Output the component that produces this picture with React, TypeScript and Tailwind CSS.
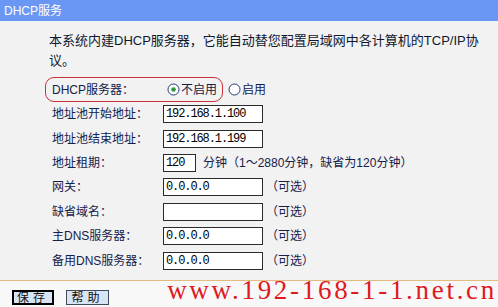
const cjk = "font-['Liberation_Sans','Noto_Sans_CJK_SC',sans-serif]"

function Radio({ checked }: { checked?: boolean }) {
  return (
    <svg width="13" height="13" viewBox="0 0 13 13" className="shrink-0">
      <circle cx="6.5" cy="6.5" r="5.5" fill="#fff" stroke="#1f3a70" strokeWidth="1" />
      {checked && <circle cx="6.5" cy="6.5" r="2.3" fill="#2f9a3a" />}
    </svg>
  )
}

function Box({ value, w = 'w-[100px]' }: { value?: string; w?: string }) {
  return (
    <div
      className={`${w} h-[18px] shrink-0 border border-[#2a2a2a] bg-white pl-[2px] font-['Liberation_Mono',monospace] text-[12px] leading-[16px] tracking-[-1.1px] text-black`}
    >
      {value}
    </div>
  )
}

function Row({ label, children }: { label: string; children: React.ReactNode }) {
  return (
    <div className="flex h-[24.4px] items-center pl-[52px]">
      <div className="w-[111px] shrink-0 text-[12px] text-[#15204a]">{label}</div>
      {children}
    </div>
  )
}

export default function App() {
  return (
    <div className={`relative h-[307px] w-[498px] overflow-hidden bg-[#f2f2f2] ${cjk}`}>
      {/* header */}
      <div className="flex h-[21px] items-center bg-[#6b97f4] pl-[4px] text-[12px] text-white">
        DHCP服务
      </div>

      {/* body */}
      <div className="h-[259px] pt-[10px]">
        <p className="pl-[49px] text-[13px] leading-[20px] text-[#101830]">
          <span className="whitespace-nowrap">本系统内建DHCP服务器，它能自动替您配置局域网中各计算机的TCP/IP协</span>
          <br />
          议。
        </p>

        <div className="mt-[6px] flex items-center">
          <div className="ml-[45px] flex h-[25px] items-center rounded-[9px] border border-[#c8303a] pl-[6px] pr-[5px]">
            <div className="w-[111px] text-[12px] text-[#15204a]">DHCP服务器：</div>
            <div className="ml-[4px] flex items-center gap-[1px]">
              <Radio checked />
              <span className="text-[12px] text-[#15204a]">不启用</span>
            </div>
          </div>
          <div className="ml-[5px] flex items-center gap-[1px]">
            <Radio />
            <span className="text-[12px] text-[#15204a]">启用</span>
          </div>
        </div>

        <Row label="地址池开始地址：">
          <Box value="192.168.1.100" />
        </Row>
        <Row label="地址池结束地址：">
          <Box value="192.168.1.199" />
        </Row>
        <Row label="地址租期：">
          <Box value="120" w="w-[33px]" />
          <span className="ml-[7px] text-[12px] text-[#15204a]">分钟（1～2880分钟，缺省为120分钟）</span>
        </Row>
        <Row label="网关：">
          <Box value="0.0.0.0" />
          <span className="ml-[3px] text-[12px] text-[#15204a]">（可选）</span>
        </Row>
        <Row label="缺省域名：">
          <Box />
          <span className="ml-[3px] text-[12px] text-[#15204a]">（可选）</span>
        </Row>
        <Row label="主DNS服务器：">
          <Box value="0.0.0.0" />
          <span className="ml-[3px] text-[12px] text-[#15204a]">（可选）</span>
        </Row>
        <Row label="备用DNS服务器：">
          <Box value="0.0.0.0" />
          <span className="ml-[3px] text-[12px] text-[#15204a]">（可选）</span>
        </Row>
      </div>

      {/* footer */}
      <div className="h-[27px] border-t border-[#e2bc7c] bg-[#f8f8f8] pl-[12px] pt-[9px]">
        <div className="flex items-center gap-[12px]">
          <button className="flex h-[15px] w-[42px] items-center justify-center border-2 border-black bg-[#d6e4f6] text-[12px] leading-none tracking-[4px] text-[#111]">
            保存
          </button>
          <button className="flex h-[15px] w-[43px] items-center justify-center border border-[#404a5a] bg-[#d6e4f6] text-[12px] leading-none tracking-[4px] text-[#111]">
            帮助
          </button>
        </div>
      </div>

      {/* watermark */}
      <div className="absolute bottom-[3px] right-[1px] font-['Liberation_Serif',serif] text-[27px] leading-none tracking-[2.7px] text-[#e0191e]">
        www.192-168-1-1.net.cn
      </div>
    </div>
  )
}
